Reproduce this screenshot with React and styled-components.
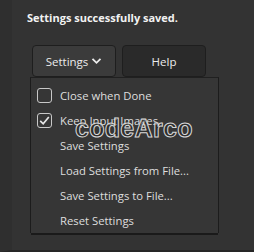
import React from 'react'
import styled, { createGlobalStyle } from 'styled-components'

const GlobalStyle = createGlobalStyle`
  html, body {
    margin: 0;
    padding: 0;
    background: #333333;
  }
  body {
    font-family: "Open Sans", "Noto Sans", sans-serif;
    -webkit-font-smoothing: antialiased;
  }
`

const Page = styled.div`
  position: relative;
  width: 254px;
  height: 252px;
  box-sizing: border-box;
  background: #333333;
  border-left: 12px solid #2f2f2f;
  border-bottom: 2px solid #262626;
  padding: 10px 0 0 15px;
  overflow: hidden;
`

const Status = styled.div`
  color: #f2f2f2;
  font-weight: 700;
  font-size: 11px;
  line-height: 16px;
`

const Toolbar = styled.div`
  display: flex;
  gap: 6px;
  margin: 19px 0 0 5px;
`

const Button = styled.button`
  width: 84px;
  height: 32px;
  box-sizing: border-box;
  border: 1px solid #1e1e1e;
  border-radius: 4px;
  background: ${p => (p.$active ? '#3b3b3b' : '#2a2a2a')};
  color: #ececec;
  font-family: "Open Sans", "Noto Sans", sans-serif;
  font-size: 11.5px;
  display: flex;
  align-items: center;
  justify-content: center;
  gap: 3px;
  padding: 0;
`

const Menu = styled.div`
  width: 189px;
  height: 156px;
  box-sizing: border-box;
  margin-left: 3px;
  border-left: 1px solid #1c1c1c;
  border-right: 1px solid #1c1c1c;
  border-top: 1px solid #202020;
  background: #363636;
  padding-top: 5px;
  box-shadow: 0 3px 0 -1px #1a1a1a;
`

const Item = styled.div`
  height: 25px;
  display: flex;
  align-items: center;
  color: #dedede;
  font-size: 11.3px;
  padding-left: 6px;
`

const Box = styled.span`
  width: 15px;
  height: 15px;
  box-sizing: border-box;
  border: 1px solid #c8c8c8;
  border-radius: 3px;
  margin-right: 8px;
  display: flex;
  align-items: center;
  justify-content: center;
`

const Label = styled.span`
  margin-left: ${p => (p.$indent ? '23px' : '0')};
`

const Watermark = styled.div`
  position: absolute;
  left: 63px;
  top: 114px;
  font-family: "Liberation Sans", sans-serif;
  font-weight: 700;
  font-size: 25px;
  letter-spacing: 0.3px;
  color: rgba(40, 40, 40, 0.55);
  -webkit-text-stroke: 1px #d8d8d8;
  pointer-events: none;
`

const Chevron = () => (
  <svg width="11" height="8" viewBox="0 0 11 8">
    <path d="M1.5 1.8 L5.5 5.8 L9.5 1.8" fill="none" stroke="#ececec" strokeWidth="1.8" />
  </svg>
)

const Check = () => (
  <svg width="13" height="13" viewBox="0 0 13 13">
    <path d="M2.2 6.8 L5.2 9.8 L10.8 3" fill="none" stroke="#e6e6e6" strokeWidth="1.7" />
  </svg>
)

const items = [
  { label: 'Close when Done', box: true },
  { label: 'Keep Input Images', box: true, checked: true },
  { label: 'Save Settings' },
  { label: 'Load Settings from File...' },
  { label: 'Save Settings to File...' },
  { label: 'Reset Settings' },
]

export default function App() {
  return (
    <>
      <GlobalStyle />
      <Page>
        <Status>Settings successfully saved.</Status>
        <Toolbar>
          <Button $active>
            Settings <Chevron />
          </Button>
          <Button>Help</Button>
        </Toolbar>
        <Menu>
          {items.map(it => (
            <Item key={it.label}>
              {it.box && <Box>{it.checked && <Check />}</Box>}
              <Label $indent={!it.box}>{it.label}</Label>
            </Item>
          ))}
        </Menu>
        <Watermark>codeArco</Watermark>
      </Page>
    </>
  )
}
